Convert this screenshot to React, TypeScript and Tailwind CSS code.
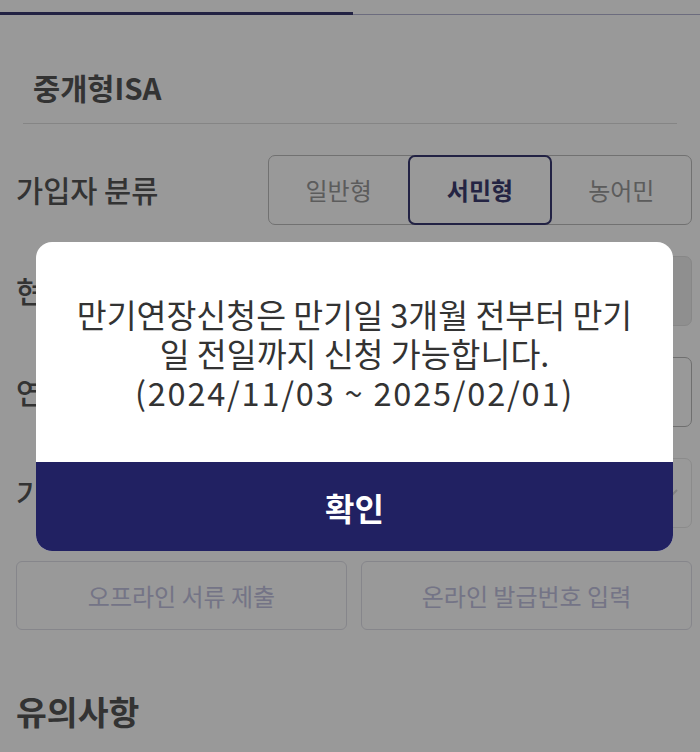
import React from "react";

const font = { fontFamily: '"Noto Sans CJK KR", "Noto Sans", sans-serif' };

function Row({ label, children }: { label: string; children: React.ReactNode }) {
  return (
    <div className="flex items-center h-[70px]">
      <div className="w-[252px] shrink-0 text-[29.5px] font-medium text-[#555] leading-none">{label}</div>
      <div className="flex-1 h-full">{children}</div>
    </div>
  );
}

export default function App() {
  return (
    <div style={font} className="relative w-[700px] h-[752px] overflow-hidden bg-white">
      {/* tabs underline */}
      <div className="h-[12px]" />
      <div className="flex items-end h-[3px]">
        <div className="w-[353px] h-[3px] bg-[#3a3a70]" />
        <div className="flex-1 h-[1px] bg-[#b4b4d2]" />
      </div>

      <div className="pl-[16px] pr-[8px]">
        {/* section header */}
        <div className="pl-[7px] pr-[15px]">
          <div className="h-[108px] flex items-end pb-[21px] pl-[10px]">
            <span className="text-[29.5px] font-bold text-[#555] leading-none">중개형ISA</span>
          </div>
          <div className="h-px bg-[#dedede]" />
        </div>

        <div className="mt-[31px] flex flex-col gap-[31px]">
          <Row label="가입자 분류">
            <div className="flex h-full rounded-[7px] border border-[#bcbcbc]">
              <div className="flex-1 flex items-center justify-center text-[24px] text-[#9a9a9a]">일반형</div>
              <div className="flex-1 -my-px flex items-center justify-center rounded-[7px] border-2 border-[#3a3a72] text-[24px] font-bold text-[#3d3d70]">서민형</div>
              <div className="flex-1 flex items-center justify-center text-[24px] text-[#9a9a9a]">농어민</div>
            </div>
          </Row>
          <Row label="현재 가입유형">
            <div className="h-full rounded-[7px] border border-[#e2e2e2] bg-[#eeeeee]" />
          </Row>
          <Row label="연간 소득금액">
            <div className="h-full rounded-[7px] border border-[#b9b9b9] bg-white" />
          </Row>
          <Row label="기준 과세기간">
            <div className="h-full rounded-[7px] border border-[#e8e8e8] bg-white flex items-center justify-end pr-[12px]">
              <svg width="14" height="10" viewBox="0 0 14 10" fill="none">
                <path d="M2 2l5 5 5-5" stroke="#dadada" strokeWidth="2" />
              </svg>
            </div>
          </Row>
        </div>

        <div className="mt-[33px] grid grid-cols-2 gap-[14px]">
          <div className="h-[69px] rounded-[6px] border border-[#e0e0e8] flex items-center justify-center text-[24px] text-[#c2c2e0]">오프라인 서류 제출</div>
          <div className="h-[69px] rounded-[6px] border border-[#e0e0e8] flex items-center justify-center text-[24px] text-[#c2c2e0]">온라인 발급번호 입력</div>
        </div>

        <div className="mt-[64px] text-[33.5px] font-bold text-[#555] leading-none">유의사항</div>
      </div>

      {/* overlay */}
      <div className="absolute inset-0 bg-black/40" />

      {/* modal */}
      <div className="absolute left-[36px] top-[242px] w-[637px] rounded-[16px] overflow-hidden bg-white">
        <div className="h-[220px] flex flex-col items-center justify-center text-[32.5px] leading-[39px] text-[#333] text-center">
          <div className="whitespace-nowrap">만기연장신청은 만기일 3개월 전부터 만기</div>
          <div className="whitespace-nowrap">일 전일까지 신청 가능합니다.</div>
          <div className="whitespace-nowrap tracking-[1.8px]">(2024/11/03 ~ 2025/02/01)</div>
        </div>
        <div className="h-[89px] bg-[#212162] flex items-center justify-center text-[32px] font-bold text-white">확인</div>
      </div>
    </div>
  );
}
